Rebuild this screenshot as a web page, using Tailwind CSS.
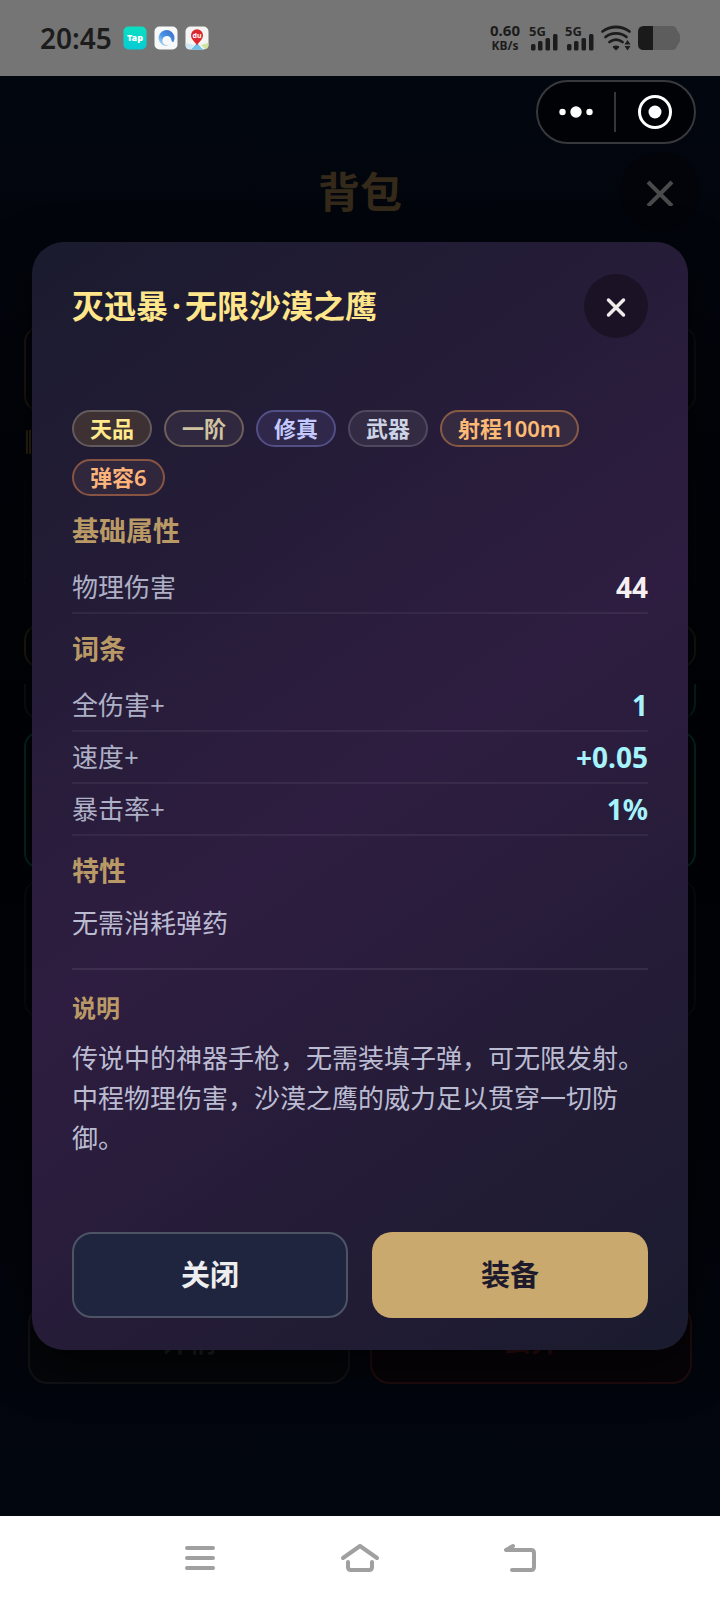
<!DOCTYPE html>
<html lang="zh-CN">
<head>
<meta charset="utf-8">
<meta name="viewport" content="width=device-width, initial-scale=1">
<title>背包</title>
<script src="https://cdn.jsdelivr.net/npm/@tailwindcss/browser@4"></script>
</head>
<body class="flex min-h-screen flex-col bg-[#020408] font-['Noto_Sans','Noto_Sans_CJK_SC',sans-serif]">

<!-- Status bar -->
<header class="flex h-[76px] items-center justify-between bg-[#757575] px-10 text-[#1c1c1c]">
  <div class="flex items-center gap-[7px]">
    <span class="mr-1 text-[28px] leading-10 font-semibold">20:45</span>
    <svg class="size-6" viewBox="0 0 24 24" role="img" aria-label="TapTap">
      <defs><linearGradient id="tap" x1="0" y1="0" x2="0" y2="1"><stop offset="0" stop-color="#0be0c0"/><stop offset="1" stop-color="#06cbd6"/></linearGradient></defs>
      <rect width="23" height="23" x=".5" y=".5" rx="5" fill="url(#tap)"/>
      <text x="12" y="15" font-size="9" font-weight="900" text-anchor="middle" fill="#fff">Tap</text>
    </svg>
    <svg class="size-6" viewBox="0 0 24 24" role="img" aria-label="浏览器">
      <defs><linearGradient id="brw" x1="0" y1="1" x2="1" y2="0"><stop offset="0" stop-color="#c9e6fb"/><stop offset=".45" stop-color="#4a94e8"/><stop offset="1" stop-color="#3a68c4"/></linearGradient></defs>
      <rect width="23" height="23" x=".5" y=".5" rx="5" fill="#f6f8fa"/>
      <path d="M19.5 16a8 8 0 1 0-11.5 2.600c2 1.500 5 1.200 6 .4-4 .4-6-2-5.600-5 .4-3 3-4.500 5.600-4 2.500.5 3 2.500 3.500 4.500.3 1 1 1.500 2 1.500z" fill="url(#brw)"/>
    </svg>
    <svg class="size-6" viewBox="0 0 24 24" role="img" aria-label="地图">
      <rect width="23" height="23" x=".5" y=".5" rx="5" fill="#f4f5f3"/>
      <path d="M6 23.500 12 17l6 6.500z" fill="#69c3ec"/>
      <path d="M1 17l8 2-4 4.500C2 23.500.5 22 .5 19z" fill="#cfe6f5"/>
      <path d="M23 17l-7 2 4 4c2 0 3.500-1.500 3.500-4z" fill="#cfe3a0"/>
      <path d="M12 19.500c-1-3-6-5.500-6-10.300a6 6 0 0 1 12 0c0 4.800-5 7.300-6 10.300z" fill="#db2730"/>
      <text x="12" y="12" font-size="7" font-weight="700" text-anchor="middle" fill="#fff">du</text>
    </svg>
  </div>
  <div class="flex items-center">
    <div class="mr-2 flex flex-col items-center font-bold">
      <span class="text-[15px] leading-4">0.60</span>
      <span class="text-[12px] leading-4">KB/s</span>
    </div>
    <svg class="mr-1 h-8 w-8" viewBox="0 -2 32 32" fill="#1c1c1c" role="img" aria-label="5G 信号">
      <text x="1" y="12" font-size="13" font-weight="700">5G</text>
      <rect x="3" y="20" width="4.500" height="6.500" rx="1.500"/><rect x="10" y="17" width="4.500" height="9.500" rx="1.500"/><rect x="17.500" y="14" width="4.500" height="12.500" rx="1.500"/><rect x="25" y="10" width="4.500" height="16.500" rx="1.500"/>
    </svg>
    <svg class="mr-1 h-8 w-8" viewBox="0 -2 32 32" fill="#1c1c1c" role="img" aria-label="5G 信号">
      <text x="1" y="12" font-size="13" font-weight="700">5G</text>
      <rect x="3" y="20" width="4.500" height="6.500" rx="1.500"/><rect x="10" y="17" width="4.500" height="9.500" rx="1.500"/><rect x="17.500" y="14" width="4.500" height="12.500" rx="1.500"/><rect x="25" y="10" width="4.500" height="16.500" rx="1.500"/>
    </svg>
    <svg class="mr-1.5 h-7 w-8" viewBox="0 0 32 28" fill="none" stroke="#1c1c1c" stroke-width="2.800" stroke-linecap="round" role="img" aria-label="无线网络">
      <path d="M2.500 7.500c8-6 19-6 27 0M5.500 13c6-4.800 15-4.800 21 0M9.500 18c4-3 9-3 13 0"/>
      <path d="M13.500 23q2.500-1.500 5 0L16 25.500z" fill="#1c1c1c" stroke-width="1.500" stroke-linejoin="round"/>
      <path d="M27.500 16l3 4.500h-6zM27.500 26.500l3-4.500h-6z" fill="#1c1c1c" stroke="none"/>
    </svg>
    <svg class="h-7 w-[42px]" viewBox="0 0 42 28" role="img" aria-label="电量">
      <path d="M6 2h28q4 0 5 4l3 5v6l-3 5q-1 4-5 4H6q-6 0-6-6V8q0-6 6-6z" fill="#5d5d5d"/>
      <path d="M15 2H6Q0 2 0 8v12q0 6 6 6h9z" fill="#1a1a1a"/>
    </svg>
  </div>
</header>

<main class="relative flex-1 overflow-hidden bg-linear-to-b from-[#02060e] via-[#010205] to-[#02060e]">

  <!-- Inventory page, dimmed behind the dialog -->
  <div class="flex flex-col px-6 pt-[76px]" aria-hidden="true">
    <div class="flex h-20 items-center">
      <div class="w-[76px]"></div>
      <h1 class="flex-1 text-center text-[42px] leading-[60px] font-bold text-[#352a1a]">背包</h1>
      <div class="-mr-1 flex size-20 items-center justify-center rounded-full bg-[#020409]">
        <svg class="size-7" viewBox="0 0 28 28" fill="none" stroke="#4a4a4a" stroke-width="4"><path d="M2 4l24 24M26 4L2 28"/></svg>
      </div>
    </div>
    <div class="mt-[94px] h-[86px] rounded-2xl border-2 border-[#0b0d10] border-l-[#1c170c]"></div>
    <div class="mt-[18px] ml-0.5 flex h-6 gap-px"><i class="w-0.5 rounded bg-[#2c220f]"></i><i class="w-0.5 bg-[#2c220f]"></i><i class="w-0.5 bg-[#2c220f]"></i></div>
    <div class="mt-[18px] h-[128px] rounded-2xl border border-dashed border-[#08090d]"></div>
    <div class="mt-6 h-11 rounded-2xl border-2 border-[#14140f] border-l-[#1e190e]"></div>
    <div class="mt-4 h-9 rounded-b-2xl border-2 border-t-0 border-[#0c1013] border-r-[#072019]"></div>
    <div class="mt-[11px] h-[138px] rounded-2xl border-2 border-[#06271f]"></div>
    <div class="mt-[11px] h-[138px] rounded-2xl border-2 border-[#090b0e]"></div>
    <div class="mt-[168px] h-[118px]"></div>
    <div class="grid grid-cols-2 gap-5 px-1 text-center text-[28px] leading-[70px] font-bold">
      <div class="h-20 rounded-[20px] border-2 border-[#121316] bg-[#040609] text-[#1e2024]">详情</div>
      <div class="h-20 rounded-[20px] border-2 border-[#200c0f] bg-[#070407] text-[#2e0d10]">丢弃</div>
    </div>
  </div>

  <!-- Item dialog -->
  <div class="absolute inset-0 flex items-center justify-center px-8">
    <section role="dialog" aria-modal="true" aria-labelledby="item-title" class="w-full rounded-[32px] bg-linear-[145deg,#1a1b2e,#2e1d40_50%,#1a1b2e] px-10 py-8 text-[26px] shadow-[0_16px_48px_rgba(0,0,0,0.6)]">
      <div class="flex items-center justify-between">
        <h2 id="item-title" class="text-[32px] leading-[44px] font-bold text-[#ffe68a]">灭迅暴<span class="px-1">·</span>无限沙漠之鹰</h2>
        <button type="button" aria-label="关闭弹窗" class="flex size-16 items-center justify-center rounded-full bg-[#1b1325]">
          <svg class="size-6" viewBox="0 0 24 24" fill="none" stroke="#f1ecec" stroke-width="3.500" stroke-linecap="round"><path d="M4.500 6l15 15M19.500 6l-15 15"/></svg>
        </button>
      </div>

      <ul class="mt-[72px] flex flex-wrap gap-3 text-[22px] leading-[33px] font-semibold">
        <li class="rounded-full border-2 border-[#625a5c] bg-[#3d3133] px-4 text-[#ffe98a]">天品</li>
        <li class="rounded-full border-2 border-[#6d5f5c] bg-[#30283e] px-4 text-[#d0c3a2]">一阶</li>
        <li class="rounded-full border-2 border-[#524e86] bg-[#2f284a] px-4 text-[#c4caff]">修真</li>
        <li class="rounded-full border-2 border-[#504860] bg-[#332a43] px-4 text-[#cbd3e4]">武器</li>
        <li class="rounded-full border-2 border-[#875a44] bg-[#352a40] px-4 text-[#fdba74]">射程100m</li>
        <li class="rounded-full border-2 border-[#875443] bg-[#31273d] px-4 text-[#fdb47a]">弹容6</li>
      </ul>

      <h3 class="pt-4 pb-3 text-[27px] leading-[38px] font-bold text-[#b99a66]">基础属性</h3>
      <dl>
        <div class="flex h-[52px] items-center justify-between border-b-2 border-white/6"><dt class="text-[#aeb0c6]">物理伤害</dt><dd class="text-[28px] font-bold text-[#f7f0f2]">44</dd></div>
      </dl>

      <h3 class="pt-4 pb-3 text-[27px] leading-[38px] font-bold text-[#b99a66]">词条</h3>
      <dl>
        <div class="flex h-[52px] items-center justify-between border-b-2 border-white/6"><dt class="text-[#aeb0c6]">全伤害+</dt><dd class="text-[28px] font-bold text-[#a5f3fc]">1</dd></div>
        <div class="flex h-[52px] items-center justify-between border-b-2 border-white/6"><dt class="text-[#aeb0c6]">速度+</dt><dd class="text-[28px] font-bold text-[#a5f3fc]">+0.05</dd></div>
        <div class="flex h-[52px] items-center justify-between border-b-2 border-white/6"><dt class="text-[#aeb0c6]">暴击率+</dt><dd class="text-[28px] font-bold text-[#a5f3fc]">1%</dd></div>
      </dl>

      <h3 class="pt-4 pb-3 text-[27px] leading-[38px] font-bold text-[#b99a66]">特性</h3>
      <p class="leading-[42px] text-[#bbbcd2]">无需消耗弹药</p>

      <div class="mt-6 border-t-2 border-white/8 pt-5">
        <h3 class="text-[24px] leading-9 font-bold text-[#b99a66]">说明</h3>
        <p class="mt-3 leading-10 text-[#bbbcd2]">传说中的神器手枪，无需装填子弹，可无限发射。中程物理伤害，沙漠之鹰的威力足以贯穿一切防御。</p>
      </div>

      <div class="mt-[74px] grid grid-cols-2 gap-6 text-[29px] leading-[44px]">
        <button type="button" class="h-[86px] rounded-[20px] border-2 border-[#4c5465] bg-[#1f253f] font-bold text-[#eeeeee]">关闭</button>
        <button type="button" class="h-[86px] rounded-[20px] bg-[#c9a96e] font-bold text-[#1d1a2b]">装备</button>
      </div>
    </section>
  </div>

  <!-- Mini-program capsule -->
  <div class="absolute top-1 right-6 flex h-16 w-40 items-center rounded-full border-2 border-[#38393d] bg-[#010206]">
    <button type="button" aria-label="更多" class="flex h-full w-[76px] items-center justify-center">
      <svg class="h-3 w-9" viewBox="0 0 36 12" fill="#fff"><circle cx="4.500" cy="6" r="3.200"/><circle cx="18" cy="6" r="5.700"/><circle cx="31.500" cy="6" r="3.200"/></svg>
    </button>
    <span class="h-10 w-0.5 bg-[#35363a]"></span>
    <button type="button" aria-label="退出" class="flex h-full flex-1 items-center justify-center">
      <svg class="size-9" viewBox="0 0 36 36"><circle cx="18" cy="18" r="15.500" fill="none" stroke="#fff" stroke-width="3"/><circle cx="18" cy="18" r="6.500" fill="#fff"/></svg>
    </button>
  </div>
</main>

<!-- System navigation -->
<nav class="flex h-[84px] items-center justify-center gap-20 bg-white">
  <button type="button" aria-label="最近任务" class="flex h-full w-20 items-center justify-center">
    <svg class="h-8 w-10" viewBox="0 0 40 32" fill="none" stroke="#a0a0a0" stroke-width="4" stroke-linecap="round"><path d="M7 6h26M7 16h26M7 26h26"/></svg>
  </button>
  <button type="button" aria-label="主页" class="flex h-full w-20 items-center justify-center">
    <svg class="h-8 w-10" viewBox="0 0 40 32" fill="none" stroke="#a0a0a0" stroke-width="4" stroke-linecap="round" stroke-linejoin="round"><path d="M3 16 20 4l17 12M8 20v5q0 3 3 3h18q3 0 3-3v-5"/></svg>
  </button>
  <button type="button" aria-label="返回" class="flex h-full w-20 items-center justify-center">
    <svg class="h-8 w-10" viewBox="0 0 40 32" fill="none" stroke="#a0a0a0" stroke-width="4" stroke-linecap="round" stroke-linejoin="round"><path d="M13 4 6 8h25q3 0 3 3v14q0 3-3 3H12"/></svg>
  </button>
</nav>
</body>
</html>
